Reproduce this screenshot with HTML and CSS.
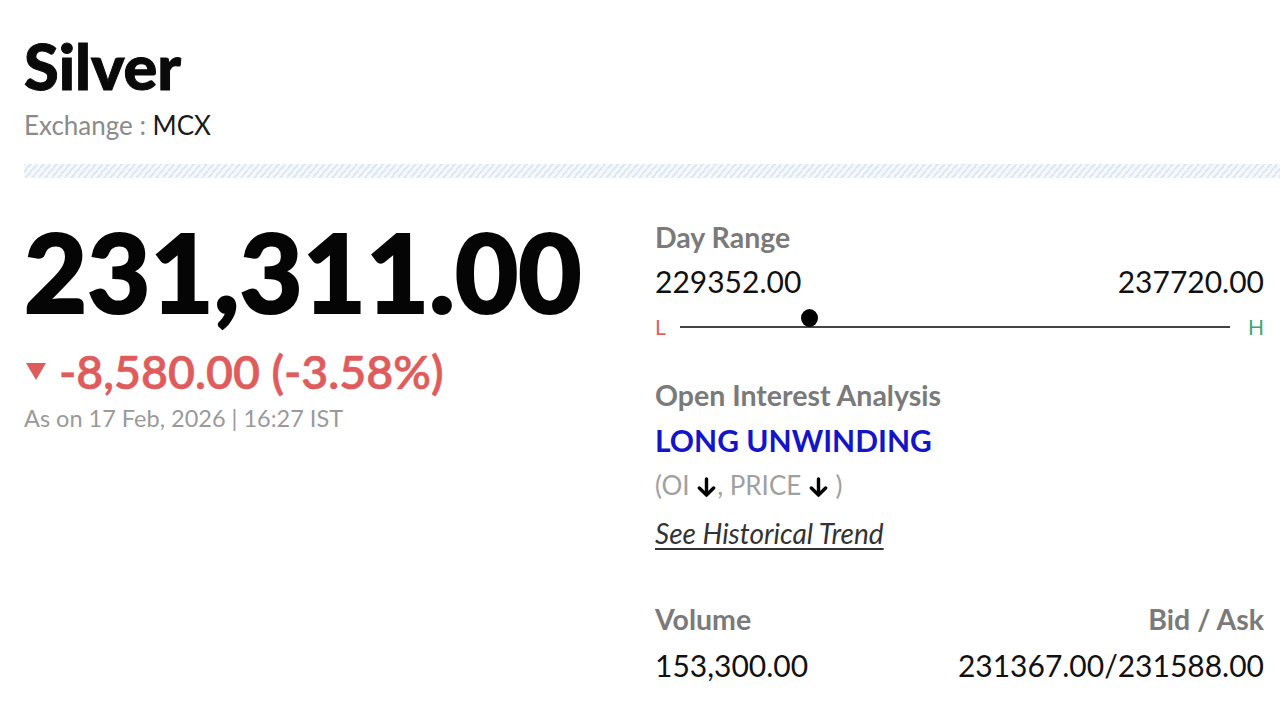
FILE: index.html
```html
<!DOCTYPE html>
<html>
<head>
<meta charset="utf-8">
<link rel="stylesheet" href="styles.css">
</head>
<body>
<div class="page">
  <header class="head">
    <h1 class="title">Silver</h1>
    <div class="exchange">Exchange : <span class="exch-val">MCX</span></div>
  </header>
  <div class="stripe"></div>
  <main class="content">
    <section class="left">
      <div class="price">231,311.00</div>
      <div class="change"><span class="tri"></span>-8,580.00 (-3.58%)</div>
      <div class="asof">As on 17 Feb, 2026 | 16:27 IST</div>
    </section>
    <section class="right">
      <div class="label">Day Range</div>
      <div class="range-vals"><span>229352.00</span><span>237720.00</span></div>
      <div class="slider">
        <span class="lo">L</span>
        <div class="track"><span class="dot" style="left:23.5%"></span></div>
        <span class="hi">H</span>
      </div>
      <div class="label oi-label">Open Interest Analysis</div>
      <div class="oi-val">LONG UNWINDING</div>
      <div class="oi-sub">(OI <svg class="arr" viewBox="0 0 20 22" width="19" height="21"><path d="M10 2V19M2.5 11.5L10 19L17.5 11.5" fill="none" stroke="#000" stroke-width="3.6" stroke-linecap="round" stroke-linejoin="round"/></svg>, PRICE <svg class="arr" viewBox="0 0 20 22" width="19" height="21"><path d="M10 2V19M2.5 11.5L10 19L17.5 11.5" fill="none" stroke="#000" stroke-width="3.6" stroke-linecap="round" stroke-linejoin="round"/></svg> )</div>
      <a class="trend" href="#">See Historical Trend</a>
      <div class="pair">
        <div class="label">Volume</div>
        <div class="label">Bid / Ask</div>
      </div>
      <div class="pair vals">
        <div>153,300.00</div>
        <div>231367.00/231588.00</div>
      </div>
    </section>
  </main>
</div>
</body>
</html>
```
FILE: styles.css
```css
* { box-sizing: border-box; }
html, body { margin: 0; padding: 0; background: #fff; }
body { font-family: Lato, "Open Sans", sans-serif; color: #111; }
.page { padding: 29px 16px 0 24px; overflow: hidden; }
.title { margin: 0; font-size: 63px; font-weight: 900; line-height: 74px; color: #0a0a0a; -webkit-text-stroke: 1px #0a0a0a; }
.exchange { font-size: 26px; color: #8a8a8a; line-height: 32px; margin-top: 6px; }
.exch-val { color: #1a1a1a; }
.stripe {
  margin-top: 23px; margin-right: -16px; height: 14px;
  background: repeating-linear-gradient(-50deg, #dde8f3 0 2px, #f6f9fc 2px 5px);
}
.content { display: flex; margin-top: 38px; }
.left { width: 631px; flex: none; }
.price { font-size: 109px; font-weight: 900; line-height: 110px; color: #050505; -webkit-text-stroke: 2px #050505; }
.change { display: flex; align-items: center; font-size: 46.5px; font-weight: 600; color: #e05c5c; line-height: 52px; margin-top: 19px; -webkit-text-stroke: 0.6px #e05c5c; }
.tri { width: 0; height: 0; border-left: 10px solid transparent; border-right: 10px solid transparent; border-top: 17px solid #e05c5c; margin: 0 13px 0 2px; }
.asof { font-size: 23.5px; color: #9a9a9a; line-height: 30px; margin-top: 6px; }
.right { flex: 1; min-width: 0; padding-top: 3px; }
.label { font-size: 28.5px; font-weight: 700; color: #7a7a7a; line-height: 36px; }
.range-vals { display: flex; justify-content: space-between; font-size: 30px; line-height: 38px; margin-top: 7px; color: #111; }
.slider { display: flex; align-items: center; margin-top: 2px; height: 36px; }
.lo { color: #e06060; font-size: 21px; width: 25px; margin-top: 12px; }
.hi { color: #3aa870; font-size: 21px; width: 34px; text-align: right; margin-top: 12px; }
.track { flex: 1; height: 2px; background: #444; position: relative; margin-top: 14px; }
.dot { position: absolute; top: -17px; width: 17px; height: 18px; margin-left: -8px; border-radius: 50%; background: #000; }
.oi-label { margin-top: 39px; }
.oi-val { font-size: 30px; font-weight: 700; color: #1414c8; line-height: 38px; margin-top: 8px; }
.oi-sub { font-size: 26px; color: #a0a0a0; line-height: 34px; margin-top: 9px; }
.arr { vertical-align: -3px; margin: 0 1px; }
.trend { display: inline-block; font-size: 28px; font-style: italic; color: #333; text-decoration: underline; text-underline-offset: 4px; line-height: 36px; margin-top: 13px; }
.pair { display: flex; justify-content: space-between; }
.trend + .pair { margin-top: 50px; }
.vals { font-size: 30px; line-height: 38px; margin-top: 9px; color: #111; }
```
